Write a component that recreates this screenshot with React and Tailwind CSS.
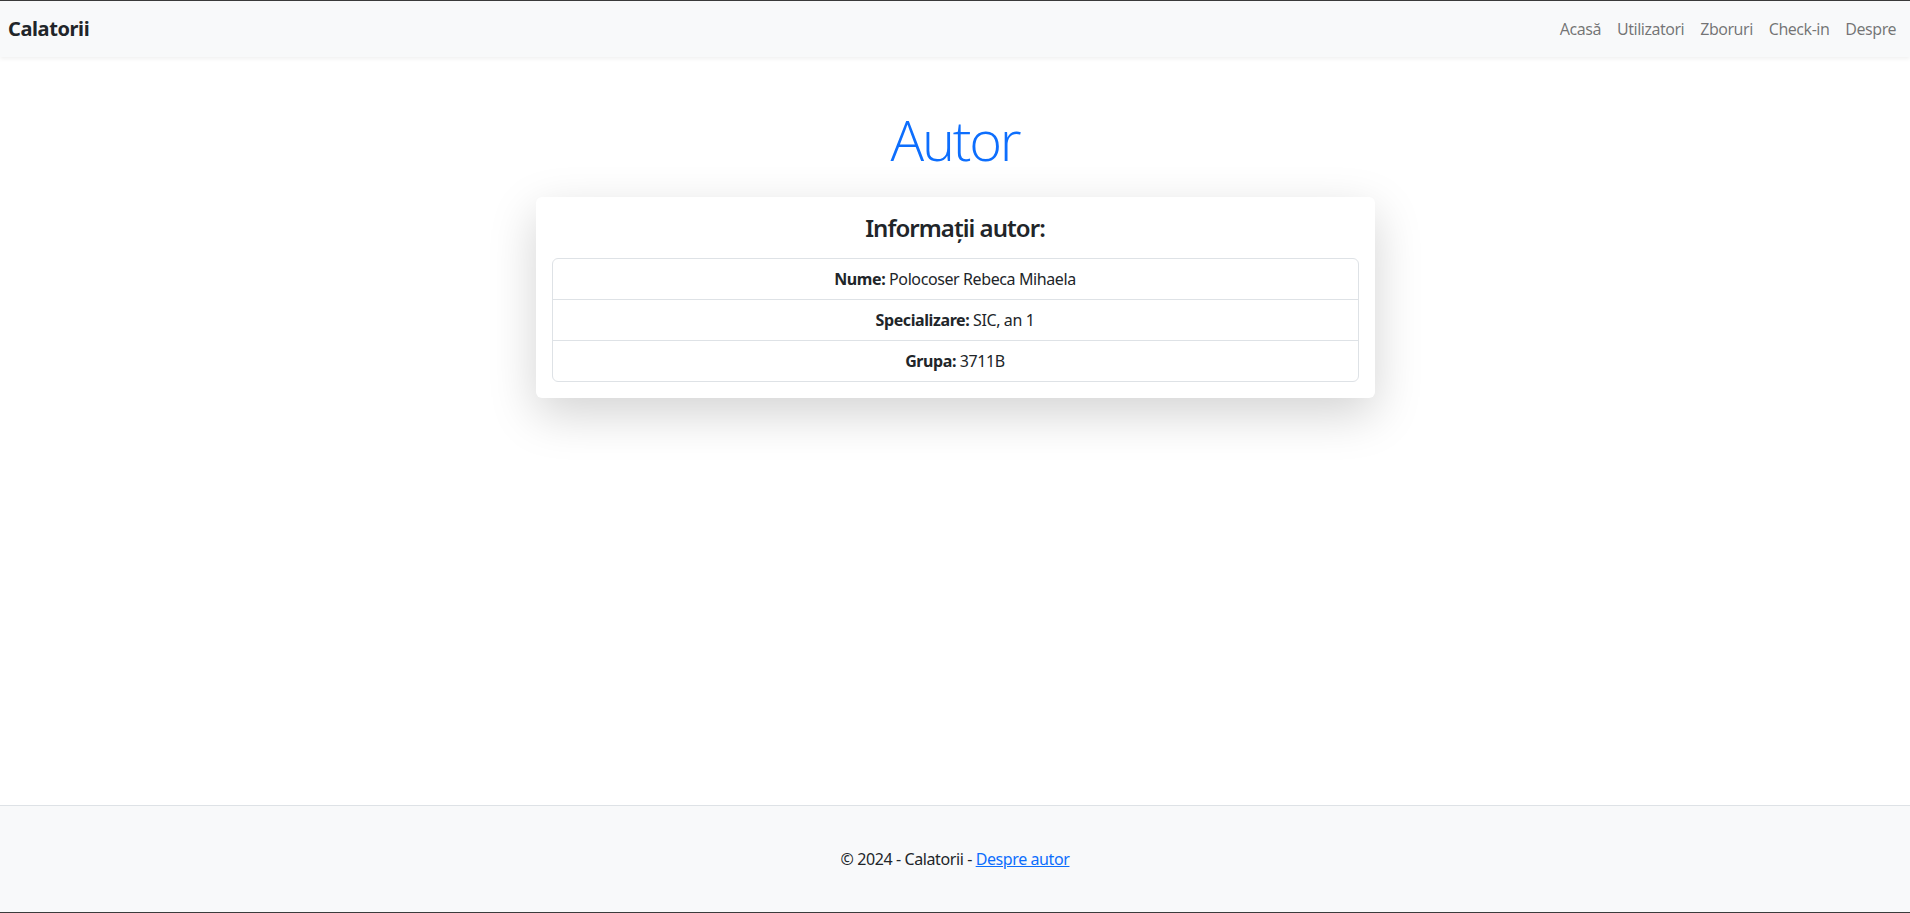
export default function App() {
  const links = ["Acasă", "Utilizatori", "Zboruri", "Check-in", "Despre"];

  return (
    <div
      className="flex min-h-screen flex-col border-y border-[#3b3b3b] bg-white tracking-[-0.025em] text-[#212529]"
      style={{ fontFamily: '"Noto Sans", "Open Sans", sans-serif' }}
    >
      {/* bara de navigare */}
      <header className="relative z-10 flex h-[56px] items-center justify-between bg-[#f8f9fa] pl-2 pr-[6px] shadow-[0_2px_4px_rgba(0,0,0,0.06)]">
        <a className="text-[20px] font-bold leading-[30px] text-[#212529]">Calatorii</a>
        <nav className="flex items-center">
          {links.map((l) => (
            <a key={l} className="px-2 text-[16px] leading-6 tracking-[-0.03em] text-[rgba(0,0,0,0.55)]">
              {l}
            </a>
          ))}
        </nav>
      </header>

      <main className="flex-1 pt-[49px]">
        <h1
          className="mb-6 text-center text-[56px] font-light leading-[67px] tracking-[-0.04em] text-[#0d6efd]"
          style={{ fontFamily: '"Open Sans", "Noto Sans", sans-serif' }}
        >
          Autor
        </h1>

        <div className="mx-auto w-[839px] rounded-md bg-white p-4 shadow-[0_1rem_3rem_rgba(0,0,0,0.175)]">
          <h4 className="mb-4 text-center text-[24px] font-semibold leading-[29px] tracking-[-0.04em]">
            Informații autor:
          </h4>
          <ul className="rounded-md border border-[#dee2e6] text-center text-[16px]">
            <li className="border-b border-[#dee2e6] px-4 py-2 leading-6">
              <strong>Nume:</strong> Polocoser Rebeca Mihaela
            </li>
            <li className="border-b border-[#dee2e6] px-4 py-2 leading-6">
              <strong>Specializare:</strong> SIC, an 1
            </li>
            <li className="px-4 py-2 leading-6">
              <strong>Grupa:</strong> 3711B
            </li>
          </ul>
        </div>
      </main>

      <footer className="border-t border-[#dee2e6] bg-[#f8f9fa] py-[41px] text-center text-[16px] leading-6">
        © 2024 - Calatorii - <a className="text-[#0d6efd] underline">Despre autor</a>
      </footer>
    </div>
  );
}
